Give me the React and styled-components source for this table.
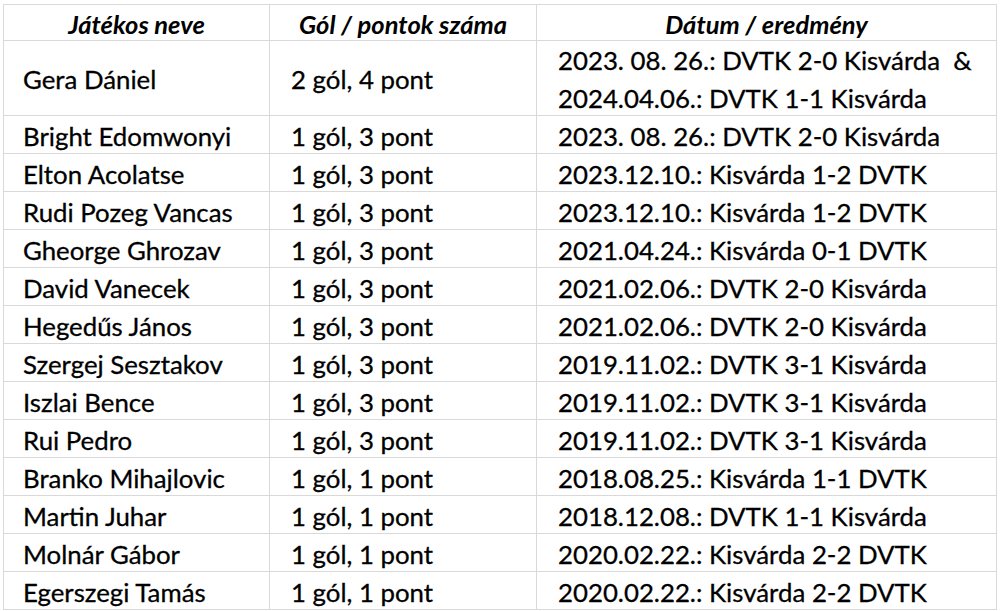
import React from 'react'
import styled, { createGlobalStyle } from 'styled-components'

const GlobalStyle = createGlobalStyle`
  html, body {
    margin: 0;
    background: #ffffff;
  }
  body {
    font-family: Lato, "Open Sans", sans-serif;
    color: #000;
  }
`

const Sheet = styled.div`
  padding: 4px 0 0 3px;
  background: #ffffff;
`

const Grid = styled.div`
  display: grid;
  grid-template-columns: 265px 266px 459px;
  grid-template-rows: 35px 74px repeat(13, 37px);
  gap: 1px;
  padding: 1px;
  width: max-content;
  background: #d9d9d9;
`

const HeadCell = styled.div`
  background: #ffffff;
  display: flex;
  align-items: center;
  justify-content: center;
  padding-top: 2px;
  font-weight: 700;
  font-style: italic;
  font-size: 25.5px;
  color: #000;
`

const Cell = styled.div`
  background: #ffffff;
  display: flex;
  flex-direction: column;
  justify-content: center;
  padding-left: ${(p) => p.$pad || 20}px;
  padding-top: 2px;
  font-size: 25.8px;
  line-height: 38px;
  white-space: pre;
  color: #000;
  -webkit-text-stroke: 0.3px #000;
`

const rows = [
  ['Gera Dániel', '2 gól, 4 pont', ['2023. 08. 26.: DVTK 2-0 Kisvárda  &', '2024.04.06.: DVTK 1-1 Kisvárda']],
  ['Bright Edomwonyi', '1 gól, 3 pont', ['2023. 08. 26.: DVTK 2-0 Kisvárda']],
  ['Elton Acolatse', '1 gól, 3 pont', ['2023.12.10.: Kisvárda 1-2 DVTK']],
  ['Rudi Pozeg Vancas', '1 gól, 3 pont', ['2023.12.10.: Kisvárda 1-2 DVTK']],
  ['Gheorge Ghrozav', '1 gól, 3 pont', ['2021.04.24.: Kisvárda 0-1 DVTK']],
  ['David Vanecek', '1 gól, 3 pont', ['2021.02.06.: DVTK 2-0 Kisvárda']],
  ['Hegedűs János', '1 gól, 3 pont', ['2021.02.06.: DVTK 2-0 Kisvárda']],
  ['Szergej Sesztakov', '1 gól, 3 pont', ['2019.11.02.: DVTK 3-1 Kisvárda']],
  ['Iszlai Bence', '1 gól, 3 pont', ['2019.11.02.: DVTK 3-1 Kisvárda']],
  ['Rui Pedro', '1 gól, 3 pont', ['2019.11.02.: DVTK 3-1 Kisvárda']],
  ['Branko Mihajlovic', '1 gól, 1 pont', ['2018.08.25.: Kisvárda 1-1 DVTK']],
  ['Martin Juhar', '1 gól, 1 pont', ['2018.12.08.: DVTK 1-1 Kisvárda']],
  ['Molnár Gábor', '1 gól, 1 pont', ['2020.02.22.: Kisvárda 2-2 DVTK']],
  ['Egerszegi Tamás', '1 gól, 1 pont', ['2020.02.22.: Kisvárda 2-2 DVTK']],
]

export default function App() {
  return (
    <Sheet>
      <GlobalStyle />
      <Grid>
        <HeadCell>Játékos neve</HeadCell>
        <HeadCell>Gól / pontok száma</HeadCell>
        <HeadCell>Dátum / eredmény</HeadCell>
        {rows.map(([name, score, dates]) => (
          <React.Fragment key={name}>
            <Cell $pad={19}>{name}</Cell>
            <Cell $pad={21}>{score}</Cell>
            <Cell $pad={21}>
              {dates.map((d) => (
                <span key={d}>{d}</span>
              ))}
            </Cell>
          </React.Fragment>
        ))}
      </Grid>
    </Sheet>
  )
}
